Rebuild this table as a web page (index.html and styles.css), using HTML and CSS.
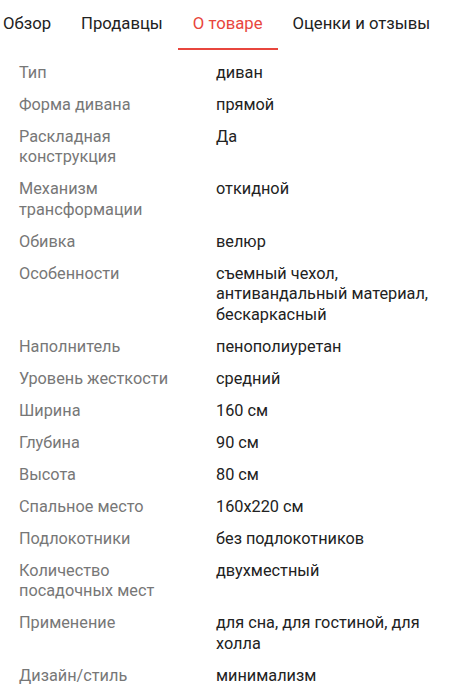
FILE: index.html
```html
<!DOCTYPE html>
<html lang="ru">
<head>
<meta charset="utf-8">
<link rel="stylesheet" href="styles.css">
</head>
<body>
<div class="page">
  <nav class="tabs">
    <div class="tab">Обзор</div>
    <div class="tab">Продавцы</div>
    <div class="tab active">О товаре</div>
    <div class="tab">Оценки и отзывы</div>
  </nav>
  <div class="specs">
    <div class="label">Тип</div><div class="value">диван</div>
    <div class="label">Форма дивана</div><div class="value">прямой</div>
    <div class="label">Раскладная конструкция</div><div class="value">Да</div>
    <div class="label">Механизм трансформации</div><div class="value">откидной</div>
    <div class="label">Обивка</div><div class="value">велюр</div>
    <div class="label">Особенности</div><div class="value">съемный чехол, антивандальный материал, бескаркасный</div>
    <div class="label">Наполнитель</div><div class="value">пенополиуретан</div>
    <div class="label">Уровень жесткости</div><div class="value">средний</div>
    <div class="label">Ширина</div><div class="value">160 см</div>
    <div class="label">Глубина</div><div class="value">90 см</div>
    <div class="label">Высота</div><div class="value">80 см</div>
    <div class="label">Спальное место</div><div class="value">160x220 см</div>
    <div class="label">Подлокотники</div><div class="value">без подлокотников</div>
    <div class="label">Количество посадочных мест</div><div class="value">двухместный</div>
    <div class="label">Применение</div><div class="value">для сна, для гостиной, для холла</div>
    <div class="label">Дизайн/стиль</div><div class="value">минимализм</div>
  </div>
</div>
</body>
</html>
```
FILE: styles.css
```css
html, body {
  margin: 0;
  padding: 0;
  background: #fff;
}
body {
  font-family: Roboto, "Noto Sans", sans-serif;
  overflow: hidden;
}
.page {
  width: 453px;
  overflow: hidden;
}
.tabs {
  display: flex;
  margin-left: -12px;
  white-space: nowrap;
}
.tab {
  flex: none;
  padding: 0 15px;
  height: 48px;
  line-height: 48px;
  font-size: 16.7px;
  color: #222;
  border-bottom: 2px solid transparent;
}
.tab.active {
  color: #e8463d;
  border-bottom-color: #e8463d;
}
.specs {
  display: grid;
  grid-template-columns: 170px 1fr;
  column-gap: 27px;
  padding: 7px 19px 0 19px;
  font-size: 16.3px;
  line-height: 20.5px;
}
.label, .value {
  padding: 5.75px 0;
}
.label {
  color: #777;
}
.value {
  color: #222;
}
```
